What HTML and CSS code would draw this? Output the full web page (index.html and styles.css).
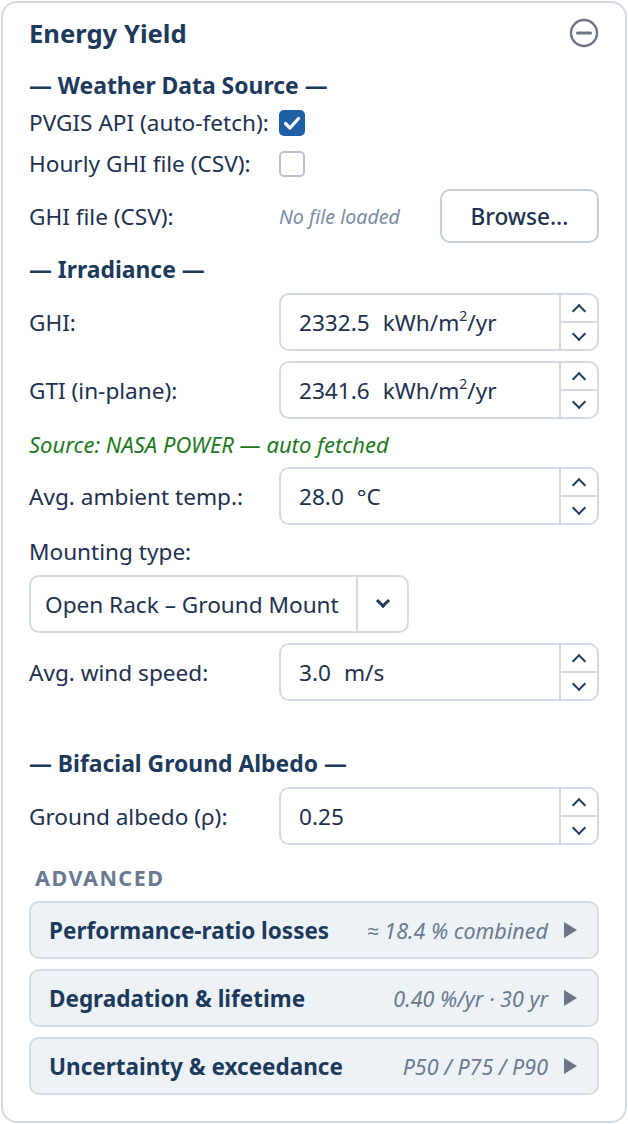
FILE: index.html
```html
<!doctype html>
<html>
    <head>
        <link rel="stylesheet" href="styles.css">
    </head>
    <body>
        <section class="panel">
            <div class="panel-head">
                <h2 class="panel-title">Energy Yield</h2>
                <button class="collapse-btn" type="button" aria-label="Collapse">
                    <svg width="30" height="30" viewBox="0 0 30 30">
                        <circle cx="15" cy="15" r="13" fill="none" stroke="#6b7585" stroke-width="2.4" />
                        <line x1="8.5" y1="15" x2="21.5" y2="15" stroke="#6b7585" stroke-width="3" stroke-linecap="round" />
                    </svg>
                </button>
            </div>

            <h3 class="group-title first">— Weather Data Source —</h3>
            <label class="check-row">
                <span>PVGIS API (auto-fetch):</span>
                <span class="box checked">
                    <svg width="26" height="26" viewBox="0 0 26 26">
                        <rect width="26" height="26" rx="5" fill="#1f5fa6" />
                        <path d="M6.5 13.5 L11 18 L19.5 8.5" fill="none" stroke="#fff" stroke-width="3.2" stroke-linecap="round" stroke-linejoin="round" />
                    </svg>
                </span>
            </label>
            <label class="check-row">
                <span>Hourly GHI file (CSV):</span>
                <span class="box"></span>
            </label>
            <div class="file-row">
                <span>GHI file (CSV):</span>
                <span class="file-note">No file loaded</span>
                <button class="browse" type="button">Browse...</button>
            </div>

            <h3 class="group-title">— Irradiance —</h3>
            <div class="field">
                <label>GHI:</label>
                <div class="num">
                    <span class="num-val">2332.5<span class="unit">kWh/m<sup>2</sup>/yr</span></span>
                    <span class="num-spin"><span class="up"></span><span class="down"></span></span>
                </div>
            </div>
            <div class="field">
                <label>GTI (in-plane):</label>
                <div class="num">
                    <span class="num-val">2341.6<span class="unit">kWh/m<sup>2</sup>/yr</span></span>
                    <span class="num-spin"><span class="up"></span><span class="down"></span></span>
                </div>
            </div>
            <p class="source-note">Source: NASA POWER — auto fetched</p>
            <div class="field">
                <label>Avg. ambient temp.:</label>
                <div class="num">
                    <span class="num-val">28.0<span class="unit">°C</span></span>
                    <span class="num-spin"><span class="up"></span><span class="down"></span></span>
                </div>
            </div>
            <label class="stack-label">Mounting type:</label>
            <div class="select">
                <span class="select-val">Open Rack – Ground Mount</span>
                <span class="select-arrow"></span>
            </div>
            <div class="field">
                <label>Avg. wind speed:</label>
                <div class="num">
                    <span class="num-val">3.0<span class="unit">m/s</span></span>
                    <span class="num-spin"><span class="up"></span><span class="down"></span></span>
                </div>
            </div>

            <h3 class="group-title wide">— Bifacial Ground Albedo —</h3>
            <div class="field">
                <label>Ground albedo (ρ):</label>
                <div class="num">
                    <span class="num-val">0.25</span>
                    <span class="num-spin"><span class="up"></span><span class="down"></span></span>
                </div>
            </div>

            <div class="adv-label">Advanced</div>
            <div class="accordion">
                <span class="acc-title">Performance-ratio losses</span>
                <span class="acc-meta">≈ 18.4 % combined</span>
                <svg class="acc-caret" width="13" height="16" viewBox="0 0 13 16"><polygon points="0,0 13,8 0,16" fill="#6b7585" /></svg>
            </div>
            <div class="accordion">
                <span class="acc-title">Degradation &amp; lifetime</span>
                <span class="acc-meta">0.40 %/yr · 30 yr</span>
                <svg class="acc-caret" width="13" height="16" viewBox="0 0 13 16"><polygon points="0,0 13,8 0,16" fill="#6b7585" /></svg>
            </div>
            <div class="accordion">
                <span class="acc-title">Uncertainty &amp; exceedance</span>
                <span class="acc-meta">P50 / P75 / P90</span>
                <svg class="acc-caret" width="13" height="16" viewBox="0 0 13 16"><polygon points="0,0 13,8 0,16" fill="#6b7585" /></svg>
            </div>
        </section>
    </body>
</html>
```

FILE: styles.css
```css
* {
    box-sizing: border-box;
}
body {
    margin: 0;
    font-family: "Noto Sans", "Open Sans", sans-serif;
    font-size: 22.6px;
    color: #1e3150;
    background: #fff;
}
.panel {
    margin: 1px;
    border: 2px solid #d3dce6;
    border-radius: 16px;
    padding: 11px 26px 26px;
    display: flex;
    flex-direction: column;
}

/* header */
.panel-head {
    display: flex;
    justify-content: space-between;
    align-items: center;
    height: 38px;
}
.panel-title {
    margin: 0;
    font-size: 25.6px;
    font-weight: 700;
    color: #1d3a5c;
}
.collapse-btn {
    border: 0;
    background: none;
    padding: 0;
    width: 30px;
    height: 30px;
    cursor: pointer;
}

.group-title {
    margin: 12px 0 0;
    font-size: 22.9px;
    font-weight: 700;
    line-height: 30px;
    color: #1d3a5c;
}
.group-title.first {
    margin-top: 19px;
}
.group-title.wide {
    margin-top: 48px;
}

/* checkbox rows */
.check-row,
.field,
.file-row {
    display: grid;
    grid-template-columns: 250px 1fr;
    align-items: center;
}
.check-row {
    height: 30px;
    margin-top: 11px;
}
.group-title + .check-row {
    margin-top: 6px;
}
.box {
    display: block;
    width: 26px;
    height: 26px;
    border: 2px solid #b9c2cf;
    border-radius: 5px;
}
.box.checked {
    border: 0;
}
.box svg {
    display: block;
}

/* file picker */
.file-row {
    grid-template-columns: 250px 1fr auto;
    height: 54px;
    margin-top: 11px;
}
.file-note {
    font-size: 19.6px;
    font-style: italic;
    color: #7a8ca3;
}
.browse {
    width: 159px;
    height: 54px;
    border: 2px solid #c5ced9;
    border-radius: 10px;
    background: #fff;
    font-family: inherit;
    font-size: 22.6px;
    font-weight: 500;
    color: #1e3150;
}

/* number inputs */
.field {
    margin-top: 10px;
}
.group-title + .field {
    margin-top: 8px;
}
.num {
    display: flex;
    height: 58px;
    border: 2px solid #d3dce6;
    border-radius: 10px;
    background: #fff;
}
.num-val {
    flex: 1;
    display: flex;
    align-items: center;
    padding-left: 18px;
}
.unit {
    margin-left: 13px;
}
.unit sup {
    font-size: 14px;
    line-height: 0;
    position: relative;
    top: -1px;
}
.num-spin {
    width: 38px;
    border-left: 2px solid #d3dce6;
    display: flex;
    flex-direction: column;
}
.num-spin span {
    flex: 1;
    display: flex;
    align-items: center;
    justify-content: center;
}
.num-spin span + span {
    border-top: 2px solid #d3dce6;
}
.num-spin span::before {
    content: "";
    width: 8px;
    height: 8px;
    border-right: 2.6px solid #1e3a5c;
    border-bottom: 2.6px solid #1e3a5c;
}
.num-spin .up::before {
    transform: translateY(3px) rotate(-135deg);
}
.num-spin .down::before {
    transform: translateY(-2px) rotate(45deg);
}

.source-note {
    margin: 12px 0 0;
    line-height: 26px;
    font-size: 22px;
    font-style: italic;
    color: #1f7a1f;
}
.stack-label {
    display: block;
    margin-top: 13px;
    line-height: 28px;
}

/* dropdown */
.select {
    display: flex;
    width: 380px;
    height: 58px;
    margin-top: 9px;
    border: 2px solid #d3dce6;
    border-radius: 10px;
}
.select-val {
    flex: 1;
    display: flex;
    align-items: center;
    padding-left: 14px;
    white-space: nowrap;
}
.select-arrow {
    width: 51px;
    border-left: 2px solid #d3dce6;
    display: flex;
    align-items: center;
    justify-content: center;
}
.select-arrow::before {
    content: "";
    width: 7px;
    height: 7px;
    border-right: 3px solid #1e3a5c;
    border-bottom: 3px solid #1e3a5c;
    transform: translateY(-3px) rotate(45deg);
}

/* advanced sections */
.adv-label {
    margin-top: 22px;
    padding-left: 6px;
    line-height: 22px;
    font-size: 21.5px;
    font-weight: 700;
    letter-spacing: 1.5px;
    text-transform: uppercase;
    color: #6b7a90;
}
.accordion {
    display: flex;
    align-items: center;
    height: 58px;
    margin-top: 10px;
    padding: 0 20px 0 18px;
    border: 2px solid #d3dce6;
    border-radius: 10px;
    background: #edf2f7;
}
.adv-label + .accordion {
    margin-top: 12px;
}
.acc-title {
    flex: 1;
    font-size: 22.5px;
    font-weight: 700;
    color: #1d3a5c;
    white-space: nowrap;
}
.acc-meta {
    font-size: 21.5px;
    font-style: italic;
    color: #6b7a8f;
    margin-right: 16px;
    white-space: nowrap;
}
.acc-caret {
    display: block;
}
```
